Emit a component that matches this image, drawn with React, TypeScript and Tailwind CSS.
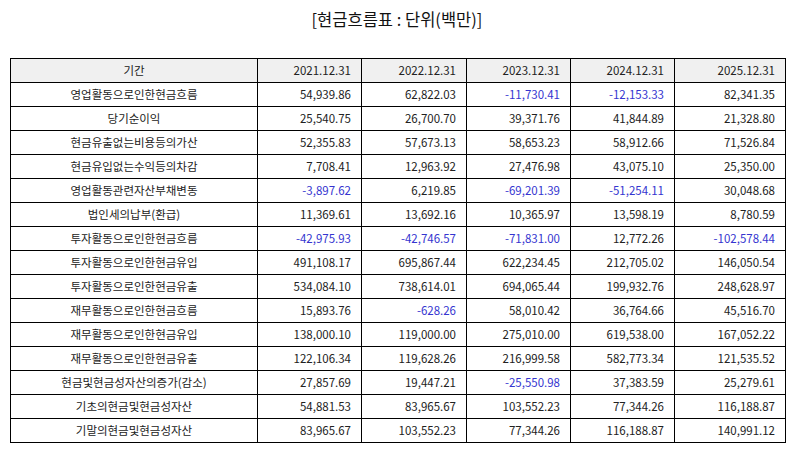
import React from 'react';

const years = ['2021.12.31', '2022.12.31', '2023.12.31', '2024.12.31', '2025.12.31'];

const rows: [string, string[]][] = [
  ['영업활동으로인한현금흐름', ['54,939.86', '62,822.03', '-11,730.41', '-12,153.33', '82,341.35']],
  ['당기순이익', ['25,540.75', '26,700.70', '39,371.76', '41,844.89', '21,328.80']],
  ['현금유출없는비용등의가산', ['52,355.83', '57,673.13', '58,653.23', '58,912.66', '71,526.84']],
  ['현금유입없는수익등의차감', ['7,708.41', '12,963.92', '27,476.98', '43,075.10', '25,350.00']],
  ['영업활동관련자산부채변동', ['-3,897.62', '6,219.85', '-69,201.39', '-51,254.11', '30,048.68']],
  ['법인세의납부(환급)', ['11,369.61', '13,692.16', '10,365.97', '13,598.19', '8,780.59']],
  ['투자활동으로인한현금흐름', ['-42,975.93', '-42,746.57', '-71,831.00', '12,772.26', '-102,578.44']],
  ['투자활동으로인한현금유입', ['491,108.17', '695,867.44', '622,234.45', '212,705.02', '146,050.54']],
  ['투자활동으로인한현금유출', ['534,084.10', '738,614.01', '694,065.44', '199,932.76', '248,628.97']],
  ['재무활동으로인한현금흐름', ['15,893.76', '-628.26', '58,010.42', '36,764.66', '45,516.70']],
  ['재무활동으로인한현금유입', ['138,000.10', '119,000.00', '275,010.00', '619,538.00', '167,052.22']],
  ['재무활동으로인한현금유출', ['122,106.34', '119,628.26', '216,999.58', '582,773.34', '121,535.52']],
  ['현금및현금성자산의증가(감소)', ['27,857.69', '19,447.21', '-25,550.98', '37,383.59', '25,279.61']],
  ['기초의현금및현금성자산', ['54,881.53', '83,965.67', '103,552.23', '77,344.26', '116,188.87']],
  ['기말의현금및현금성자산', ['83,965.67', '103,552.23', '77,344.26', '116,188.87', '140,991.12']],
];

const colWidths = ['w-[247px]', 'w-[104px]', 'w-[105px]', 'w-[104px]', 'w-[104px]', 'w-[111px]'];

export default function App() {
  return (
    <div className="w-[794px] h-[452px] bg-white pt-[7px] text-[#222] font-['Noto_Sans_CJK_KR','Noto_Sans',sans-serif]">
      <h1 className="text-center text-[16.5px] leading-[24px] text-[#111]">[현금흐름표 : 단위(백만)]</h1>
      <table className="mt-[27px] ml-[10px] w-[775px] border-collapse table-fixed text-[11.5px]">
        <colgroup>
          {colWidths.map((w, i) => (
            <col key={i} className={w} />
          ))}
        </colgroup>
        <thead>
          <tr className="bg-[#f0f0f0]">
            <th className="h-[24px] border border-black font-normal text-center p-0">기간</th>
            {years.map((y) => (
              <th key={y} className="h-[24px] border border-black font-normal text-right pr-[10px] py-0">
                {y}
              </th>
            ))}
          </tr>
        </thead>
        <tbody>
          {rows.map(([label, vals]) => (
            <tr key={label}>
              <td className="h-[24px] border border-black text-center p-0">{label}</td>
              {vals.map((v, i) => (
                <td
                  key={i}
                  className={
                    'h-[24px] border border-black text-right pr-[10px] py-0 ' +
                    (v.startsWith('-') ? 'text-[#3535d0]' : '')
                  }
                >
                  {v}
                </td>
              ))}
            </tr>
          ))}
        </tbody>
      </table>
    </div>
  );
}
